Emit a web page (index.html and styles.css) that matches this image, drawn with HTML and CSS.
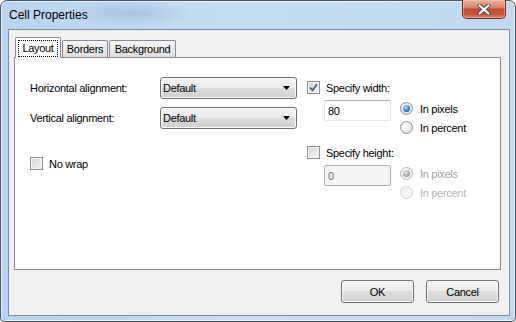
FILE: index.html
```html
<!DOCTYPE html>
<html lang="en">
<head>
    <meta charset="UTF-8">
    <meta name="viewport" content="width=device-width, initial-scale=1.0">
    <title>Cell Properties</title>
    <link rel="stylesheet" href="styles.css">
</head>
<body>
    <div class="window">
        <div class="titlebar">
            <span class="title">Cell Properties</span>
            <button class="close" aria-label="Close">
                <svg width="14" height="11" viewBox="0 0 14 11">
                    <path d="M2.5 1.5 L11.5 9.5 M11.5 1.5 L2.5 9.5" stroke="#4a4a4a" stroke-width="4.2" stroke-linecap="round"/>
                    <path d="M2.5 1.5 L11.5 9.5 M11.5 1.5 L2.5 9.5" stroke="#fff" stroke-width="2.2" stroke-linecap="round"/>
                </svg>
            </button>
        </div>
        <div class="client">
            <div class="tabs">
                <div class="tab active tab-layout"><span class="focus">Layout</span></div>
                <div class="tab tab-borders">Borders</div>
                <div class="tab tab-background">Background</div>
            </div>
            <div class="panel">
                <div class="col-left">
                    <div class="field-grid">
                        <span class="label">Horizontal alignment:</span>
                        <div class="select">
                            <span>Default</span>
                            <svg width="7" height="4" viewBox="0 0 7 4"><path d="M0 0 H7 L3.5 4 Z" fill="#000"/></svg>
                        </div>
                        <span class="label">Vertical alignment:</span>
                        <div class="select">
                            <span>Default</span>
                            <svg width="7" height="4" viewBox="0 0 7 4"><path d="M0 0 H7 L3.5 4 Z" fill="#000"/></svg>
                        </div>
                    </div>
                    <div class="check nowrap">
                        <span class="box"></span>
                        <span>No wrap</span>
                    </div>
                </div>
                <div class="col-right">
                    <div class="group">
                        <div class="check">
                            <span class="box">
                                <svg width="11" height="11" viewBox="0 0 11 11"><path d="M2 5.5 L4.5 8.3 L9 2.3" fill="none" stroke="#4b5d8c" stroke-width="1.7"/></svg>
                            </span>
                            <span>Specify width:</span>
                        </div>
                        <div class="size-row">
                            <input class="field" type="text" value="80">
                            <div class="radios">
                                <div class="radio-row"><span class="radio on"></span><span>In pixels</span></div>
                                <div class="radio-row"><span class="radio"></span><span>In percent</span></div>
                            </div>
                        </div>
                    </div>
                    <div class="group group-height">
                        <div class="check">
                            <span class="box"></span>
                            <span>Specify height:</span>
                        </div>
                        <div class="size-row">
                            <input class="field" type="text" value="0" disabled>
                            <div class="radios disabled">
                                <div class="radio-row"><span class="radio on"></span><span>In pixels</span></div>
                                <div class="radio-row"><span class="radio"></span><span>In percent</span></div>
                            </div>
                        </div>
                    </div>
                </div>
            </div>
            <div class="actions">
                <button class="btn">OK</button>
                <button class="btn">Cancel</button>
            </div>
        </div>
    </div>
</body>
</html>
```

FILE: styles.css
```css
body {
    margin: 0;
    font-family: "Liberation Sans", Arial, sans-serif;
    font-size: 11px;
    letter-spacing: -0.3px;
    color: #000;
    background: #fff;
}

.window {
    width: 516px;
    height: 322px;
    box-sizing: border-box;
    border: 1px solid #4c5866;
    border-radius: 7px 7px 4px 4px;
    padding: 0 5px 5px 7px;
    display: flex;
    flex-direction: column;
    background:
        radial-gradient(ellipse 60px 14px at 130px 12px, rgba(140, 170, 205, 0.45), rgba(140, 170, 205, 0)),
        linear-gradient(90deg, #bad3ee, #c6ddf4 45%, #c2d9f1);
    box-shadow: inset 0 0 0 1px rgba(255, 255, 255, 0.55);
}

.titlebar {
    height: 28px;
    display: flex;
    align-items: flex-start;
}

.title {
    font-size: 12px;
    letter-spacing: 0;
    line-height: 14px;
    padding: 7px 0 0 1px;
}

.close {
    margin: -1px 4px 0 auto;
    width: 44px;
    height: 19px;
    padding: 0;
    box-sizing: border-box;
    border: 1px solid #6e2b22;
    border-top: none;
    border-radius: 0 0 5px 5px;
    background: linear-gradient(#e7ad9c, #d98870 40%, #c24a32 52%, #c9553a 80%, #de8a6b);
    box-shadow: inset 0 0 0 1px rgba(255, 210, 195, 0.45);
    display: flex;
    align-items: center;
    justify-content: center;
}

.client {
    flex: 1;
    border: 1px solid #7f8c9a;
    background: #f0f0f0;
    display: flex;
    flex-direction: column;
    padding: 7px 8px 12px 5px;
}

.tabs {
    display: flex;
    align-items: flex-end;
    height: 20px;
    padding-left: 1px;
}

.tab {
    height: 17px;
    box-sizing: border-box;
    border: 1px solid #898c95;
    border-bottom: none;
    border-radius: 2px 2px 0 0;
    background: linear-gradient(#f5f5f5, #dedede);
    display: flex;
    align-items: center;
    justify-content: center;
    margin-right: 1px;
}

.tab.active {
    height: 21px;
    margin-bottom: -1px;
    background: #fff;
    position: relative;
    z-index: 1;
}

.tab-layout { width: 46px; }
.tab-borders { width: 46px; }
.tab-background { width: 67px; }

.focus {
    border: 1px dotted #000;
    padding: 1px 3px 2px;
    line-height: 12px;
}

.panel {
    height: 213px;
    box-sizing: border-box;
    border: 1px solid #898c95;
    background: #fff;
    display: flex;
    align-items: flex-start;
    padding: 19px 0 0 15px;
}

.col-left {
    width: 267px;
}

.field-grid {
    display: grid;
    grid-template-columns: 130px 137px;
    grid-auto-rows: 22px;
    row-gap: 8px;
    align-items: center;
}

.select {
    height: 22px;
    box-sizing: border-box;
    border: 1px solid #707070;
    border-radius: 3px;
    background: linear-gradient(#f2f2f2, #ebebeb 50%, #dddddd 50%, #cfcfcf);
    box-shadow: inset 0 0 0 1px #fbfbfb;
    display: flex;
    align-items: center;
    justify-content: space-between;
    padding: 0 6px 0 2px;
}

.check {
    display: flex;
    align-items: center;
    gap: 6px;
    height: 13px;
}

.nowrap {
    margin-top: 28px;
}

.box {
    width: 13px;
    height: 13px;
    box-sizing: border-box;
    border: 1px solid #8e8f8f;
    background: linear-gradient(135deg, #d0d3d7, #f6f6f6);
    box-shadow: inset 0 0 0 1px #f6f6f6;
    display: flex;
    align-items: center;
    justify-content: center;
}

.col-right {
    margin-left: 10px;
    padding-top: 4px;
}

.group-height {
    margin-top: 12px;
}

.size-row {
    display: flex;
    align-items: flex-start;
    margin-top: 6px;
    padding-left: 17px;
}

.field {
    width: 67px;
    height: 21px;
    box-sizing: border-box;
    margin: 0;
    border: 1px solid #abadb3;
    border-color: #abadb3 #dbdfe6 #e3e9ef #e2e3ea;
    border-radius: 2px;
    padding: 0 3px;
    font: inherit;
    letter-spacing: inherit;
    color: #000;
    background: #fff;
    outline: none;
}

.field:disabled {
    background: #f4f4f4;
    border-color: #afafaf;
    color: #6d6d6d;
}

.radios {
    margin-left: 9px;
    padding-top: 2px;
    display: flex;
    flex-direction: column;
    gap: 6px;
}

.radio-row {
    display: flex;
    align-items: center;
    gap: 7px;
    height: 13px;
}

.radio {
    width: 13px;
    height: 13px;
    box-sizing: border-box;
    border: 1px solid #8e8f8f;
    border-radius: 50%;
    background: radial-gradient(circle at 40% 35%, #fff, #d4d4d4);
    display: flex;
    align-items: center;
    justify-content: center;
}

.radio.on::after {
    content: "";
    width: 7px;
    height: 7px;
    border-radius: 50%;
    background: radial-gradient(circle at 40% 35%, #b4e8ff, #2a86cf 55%, #0f4e8e);
}

.radios.disabled .radio-row {
    color: #a3a3a3;
}

.radios.disabled .radio {
    border-color: #b8b8b8;
    background: radial-gradient(circle at 40% 35%, #fff, #e6e6e6);
}

.radios.disabled .radio.on::after {
    background: radial-gradient(circle at 40% 35%, #e8e8e8, #a6a6a6 60%, #8a8a8a);
}

.radios.disabled .radio-row + .radio-row {
    color: #b4b4b4;
}

.radios.disabled .radio-row + .radio-row .radio {
    border-color: #d2d2d2;
    background: #f4f4f4;
}

.actions {
    display: flex;
    justify-content: flex-end;
    gap: 12px;
    margin-top: 10px;
    padding-right: 2px;
}

.btn {
    width: 73px;
    height: 23px;
    box-sizing: border-box;
    border: 1px solid #707070;
    border-radius: 3px;
    background: linear-gradient(#f2f2f2, #ebebeb 50%, #dddddd 50%, #cfcfcf);
    box-shadow: inset 0 0 0 1px #fcfcfc;
    font: inherit;
    letter-spacing: inherit;
    color: #000;
    padding: 0;
}
```
